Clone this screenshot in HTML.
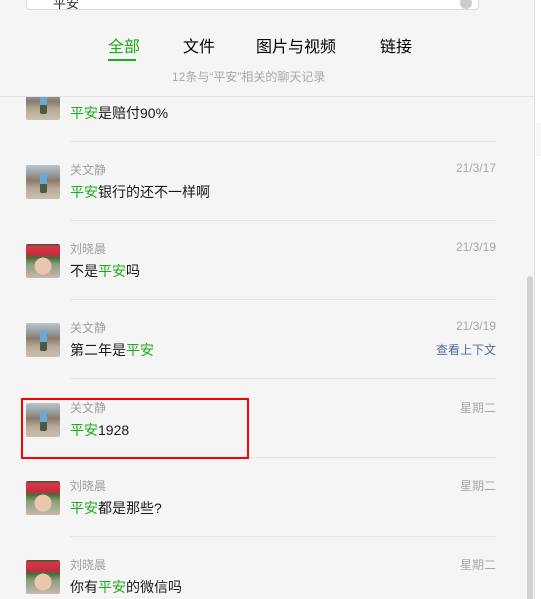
<!DOCTYPE html>
<html><head><meta charset="utf-8"><style>
*{margin:0;padding:0;box-sizing:border-box}
body{width:541px;height:599px;overflow:hidden;background:#fff;font-family:"Liberation Sans","Noto Sans CJK SC",sans-serif;position:relative}
#main{position:absolute;left:0;top:0;width:535px;height:599px;background:#f5f5f5;overflow:hidden;border-right:1px solid #e0e0e0}
.search{position:absolute;left:26px;top:-20px;width:453px;height:30px;background:#fff;border:1px solid #dcdcdc;border-radius:4px}
.tab{position:absolute;white-space:nowrap}
.hdr{position:absolute;left:0;top:0;width:535px;height:97px;background:#f5f5f5;border-bottom:1px solid #e4e4e4;z-index:2}
.row{position:absolute;left:0;width:535px;height:79px}
.av{position:absolute;left:26px;top:0;width:34px;height:34px;border-radius:2px}
.a1{background:linear-gradient(180deg,#b9c4cf 0%,#9aa0a0 25%,#8a7a6a 45%,#b8aa98 70%,#cbbfae 100%)}
.a1::after{content:"";position:absolute;left:14px;top:8px;width:7px;height:20px;background:linear-gradient(#6aa8d8 0 55%,#4a5a40 55%);border-radius:2px}
.a2{background:radial-gradient(circle at 50% 65%,#e8c7ae 0 30%,transparent 31%),linear-gradient(180deg,#2e5b2e 0%,#d83848 8%,#c82b3d 30%,#4a6a3a 40%,#8a9f7a 60%,#c9b8ae 100%)}
.name{position:absolute;left:70px;top:-4px;font-size:12px;color:#a0a0a0}
.msg{position:absolute;left:70px;top:17px;font-size:14px;color:#1a1a1a;white-space:nowrap}
.g{color:#1aad19}
.date{position:absolute;right:39px;top:-4px;font-size:12px;color:#a8a8a8}
.ctx{position:absolute;right:39px;top:18px;font-size:12px;color:#576b95}
.line{position:absolute;left:70px;width:426px;height:1px;background:#e6e6e6}
.sb{position:absolute;left:527px;top:276px;width:6px;height:323px;background:#d2d2d2;border-radius:3px 3px 0 0}
</style></head><body>
<div id="main">
<div class="row" style="top:86px"><div class="av a1"></div><div class="msg"><span class="g">平安</span>是赔付90%</div></div>
<div class="line" style="top:141px"></div>
<div class="row" style="top:165px"><div class="av a1"></div><div class="name">关文静</div><div class="date">21/3/17</div><div class="msg"><span class="g">平安</span>银行的还不一样啊</div></div>
<div class="line" style="top:220px"></div>
<div class="row" style="top:244px"><div class="av a2"></div><div class="name">刘晓晨</div><div class="date">21/3/19</div><div class="msg">不是<span class="g">平安</span>吗</div></div>
<div class="line" style="top:299px"></div>
<div class="row" style="top:323px"><div class="av a1"></div><div class="name">关文静</div><div class="date">21/3/19</div><div class="ctx">查看上下文</div><div class="msg">第二年是<span class="g">平安</span></div></div>
<div class="line" style="top:378px"></div>
<div class="row" style="top:403px"><div class="av a1"></div><div class="name">关文静</div><div class="date">星期二</div><div class="msg"><span class="g">平安</span>1928</div></div>
<div class="line" style="top:457px"></div>
<div class="row" style="top:481px"><div class="av a2"></div><div class="name">刘晓晨</div><div class="date">星期二</div><div class="msg"><span class="g">平安</span>都是那些?</div></div>
<div class="line" style="top:536px"></div>
<div class="row" style="top:560px"><div class="av a2"></div><div class="name">刘晓晨</div><div class="date">星期二</div><div class="msg">你有<span class="g">平安</span>的微信吗</div></div>
<div style="position:absolute;left:21px;top:398px;width:228px;height:61px;border:2px solid #f00;z-index:3"></div>
<div class="sb"></div>
<div class="hdr">
<div class="search"><span style="position:absolute;left:26px;top:12px;font-size:13px;color:#333">平安</span><span style="position:absolute;right:6px;top:16px;width:12px;height:12px;border-radius:6px;background:#ccc"></span></div>
<div class="tab" style="left:108px;top:33px;font-size:16px;color:#1aad19">全部</div>
<div style="position:absolute;left:108px;top:59px;width:28px;height:2px;background:#1aad19"></div>
<div class="tab" style="left:183px;top:33px;font-size:16px">文件</div>
<div class="tab" style="left:256px;top:33px;font-size:16px">图片与视频</div>
<div class="tab" style="left:380px;top:33px;font-size:16px">链接</div>
<div style="position:absolute;left:172px;top:68px;font-size:12px;color:#a8a8a8">12条与“平安”相关的聊天记录</div>
</div>
</div>
<div style="position:absolute;left:536px;top:123px;width:5px;height:33px;background:#f7f7f7"></div>
</body></html>
